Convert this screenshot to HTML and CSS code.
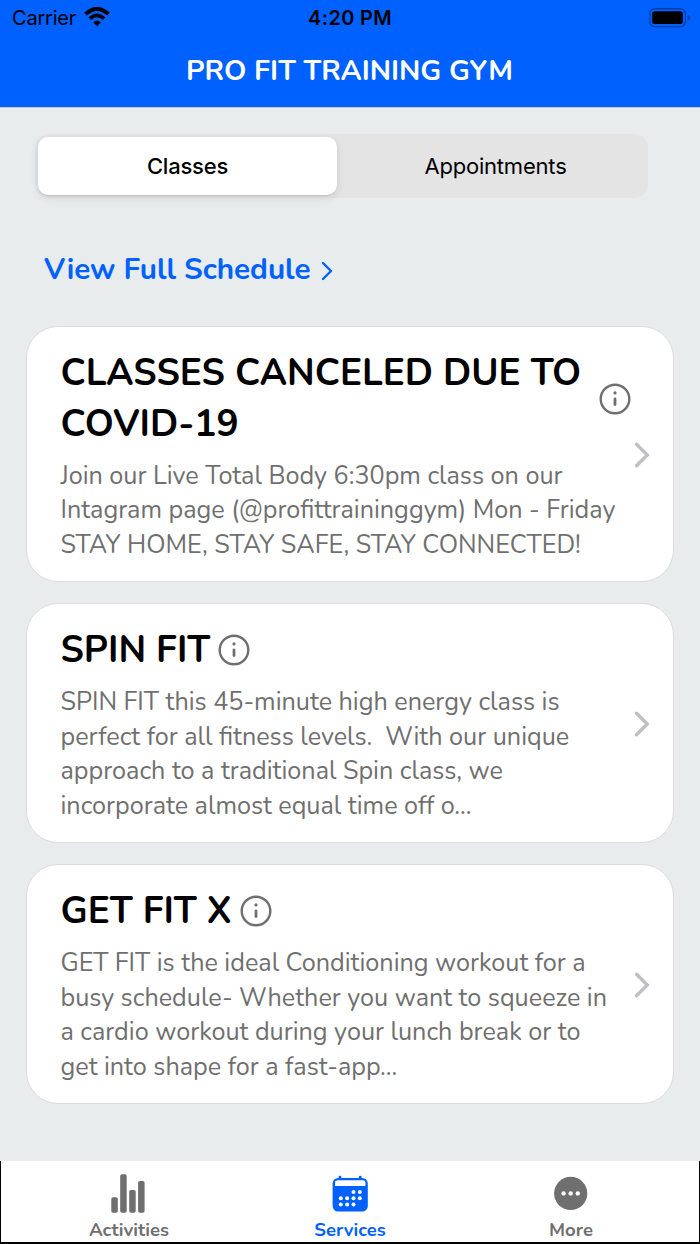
FILE: index.html
```
<!DOCTYPE html>
<html lang="en">
<head>
<meta charset="UTF-8" />
<meta name="viewport" content="width=device-width, initial-scale=1" />
<title>Pro Fit Training Gym</title>
<link rel="stylesheet" href="styles.css">
</head>
<body>

<!-- shared icons -->
<svg class="defs" width="0" height="0">
  <symbol id="info" viewBox="0 0 32 32">
    <circle cx="16" cy="16" r="14.3" fill="none" stroke="#6f6f6f" stroke-width="2.4" />
    <circle cx="16" cy="9.9" r="1.6" fill="#6f6f6f" />
    <path d="M16 16v5.6" stroke="#6f6f6f" stroke-width="2.8" stroke-linecap="round" />
  </symbol>
  <symbol id="chevron" viewBox="0 0 16 28">
    <path d="M2.5 3.2L13.3 14L2.5 24.8" fill="none" stroke="#c0c0c2" stroke-width="3.4" stroke-linecap="round" stroke-linejoin="miter" />
  </symbol>
</svg>

<header class="header">
  <div class="status">
    <div class="carrier">
      <span>Carrier</span>
      <svg class="wifi" width="26" height="20" viewBox="0 0 26 20">
        <path d="M1.5 7.2Q13 -3.4 24.5 7.2" fill="none" stroke="#000" stroke-width="3.8" />
        <path d="M5.8 11.7Q13 5.2 20.2 11.7" fill="none" stroke="#000" stroke-width="3.6" />
        <path d="M9.2 15.3Q13 11.9 16.8 15.3L13 19.2Z" fill="#000" />
      </svg>
    </div>
    <div class="time">4:20 PM</div>
    <div class="battery">
      <svg width="42" height="20" viewBox="0 0 42 20">
        <rect x="0.8" y="0.8" width="35.6" height="17.8" rx="5" fill="none" stroke="#003fa8" stroke-width="1.4" />
        <rect x="3.2" y="3.2" width="30.6" height="12.8" rx="2.6" fill="#000" />
        <path d="M38.6 6.5Q41 7.6 41 9.7Q41 11.8 38.6 12.9Z" fill="#003fa8" />
      </svg>
    </div>
  </div>
  <h1>PRO FIT TRAINING GYM</h1>
</header>

<main class="content">
  <div class="segmented">
    <button class="segment active">Classes</button>
    <button class="segment">Appointments</button>
  </div>

  <a class="schedule" href="#">
    <span>View Full Schedule</span>
    <svg width="12" height="20" viewBox="0 0 12 20">
      <path d="M2 2L10 10L2 18" fill="none" stroke="#0061ff" stroke-width="2.4" stroke-linecap="round" stroke-linejoin="round" />
    </svg>
  </a>

  <section class="card covid">
    <div class="card-text">
      <div class="card-title">
        <h2>CLASSES CANCELED DUE TO<br>COVID-19</h2>
        <svg class="info"><use href="#info" /></svg>
      </div>
      <p>
        Join our Live Total Body 6:30pm class on our<br>
        Intagram page (@profittraininggym) Mon - Friday<br>
        STAY HOME, STAY SAFE, STAY CONNECTED!
      </p>
    </div>
    <svg class="chevron"><use href="#chevron" /></svg>
  </section>

  <section class="card">
    <div class="card-text">
      <div class="card-title">
        <h2>SPIN FIT</h2>
        <svg class="info"><use href="#info" /></svg>
      </div>
      <p>
        SPIN FIT this 45-minute high energy class is<br>
        perfect for all fitness levels.&nbsp; With our unique<br>
        approach to a traditional Spin class, we<br>
        incorporate almost equal time off o...
      </p>
    </div>
    <svg class="chevron"><use href="#chevron" /></svg>
  </section>

  <section class="card">
    <div class="card-text">
      <div class="card-title">
        <h2>GET FIT X</h2>
        <svg class="info"><use href="#info" /></svg>
      </div>
      <p>
        GET FIT is the ideal Conditioning workout for a<br>
        busy schedule- Whether you want to squeeze in<br>
        a cardio workout during your lunch break or to<br>
        get into shape for a fast-app...
      </p>
    </div>
    <svg class="chevron"><use href="#chevron" /></svg>
  </section>
</main>

<nav class="tabbar">
  <a class="tab" href="#">
    <svg width="36" height="40" viewBox="0 0 36 40">
      <rect x="0.3" y="23.3" width="6.5" height="15.4" rx="1.8" />
      <rect x="9.2" y="0.3" width="6.5" height="38.4" rx="1.8" />
      <rect x="18.2" y="16" width="6.5" height="22.7" rx="1.8" />
      <rect x="27.1" y="7" width="6.5" height="31.7" rx="1.8" />
    </svg>
    <span>Activities</span>
  </a>
  <a class="tab active" href="#">
    <svg width="36" height="40" viewBox="0 0 36 40">
      <rect x="6.6" y="1.8" width="2.8" height="6" rx="1.2" />
      <rect x="26.8" y="1.8" width="2.8" height="6" rx="1.2" />
      <rect x="0.6" y="4" width="35.2" height="33.6" rx="5.5" />
      <path d="M6 6.3H30.5Q33.4 6.3 33.4 8.6V12.1H3V8.6Q3 6.3 6 6.3Z" fill="#fff" />
      <g fill="#fff">
        <circle cx="21.5" cy="18" r="2" /><circle cx="27.8" cy="18" r="2" />
        <circle cx="8.8" cy="24.3" r="2" /><circle cx="15.1" cy="24.3" r="2" /><circle cx="21.5" cy="24.3" r="2" /><circle cx="27.8" cy="24.3" r="2" />
        <circle cx="8.8" cy="30.6" r="2" /><circle cx="15.1" cy="30.6" r="2" /><circle cx="21.5" cy="30.6" r="2" />
      </g>
    </svg>
    <span>Services</span>
  </a>
  <a class="tab" href="#">
    <svg width="36" height="40" viewBox="0 0 36 40">
      <circle cx="17.7" cy="19.4" r="16.6" />
      <g fill="#fff">
        <circle cx="10.6" cy="19.4" r="2.2" /><circle cx="17.7" cy="19.4" r="2.2" /><circle cx="24.8" cy="19.4" r="2.2" />
      </g>
    </svg>
    <span>More</span>
  </a>
</nav>

</body>
</html>
```
FILE: styles.css
```
* {
  box-sizing: border-box;
}
body {
  margin: 0;
  height: 1244px;
  display: flex;
  flex-direction: column;
  background: #e8eced;
  font-family: Nunito, Lato, sans-serif;
  overflow: hidden;
}
svg {
  display: block;
  flex: none;
}
a {
  text-decoration: none;
}
.defs {
  position: absolute;
}

/* Header */
.header {
  height: 108px;
  flex: none;
  background: #0061ff;
  border-bottom: 1px solid #bfc5cd;
}
.status {
  height: 36px;
  padding: 0 12px;
  display: grid;
  grid-template-columns: 1fr auto 1fr;
  align-items: center;
  font-family: Inter, sans-serif;
  font-size: 20px;
  line-height: 36px;
  color: #000;
}
.carrier {
  display: flex;
  align-items: center;
  letter-spacing: -0.2px;
}
.wifi {
  margin: -3px 0 0 8px;
}
.time {
  font-weight: 600;
  letter-spacing: 0.3px;
}
.battery {
  justify-self: end;
  margin: -1px -3px 0 0;
}
h1 {
  margin: 0;
  padding-right: 1px;
  font-size: 28.5px;
  font-weight: 700;
  line-height: 70px;
  text-align: center;
  color: #fff;
}

/* Classes / Appointments switch */
.content {
  flex: 1;
  padding: 26px 26px 0;
}
.segmented {
  width: 613px;
  height: 64px;
  margin-left: 9px;
  padding: 3px;
  display: flex;
  gap: 9px;
  background: #e4e4e4;
  border-radius: 14px;
}
.segment {
  flex: 1;
  height: 58px;
  padding: 0;
  border: none;
  border-radius: 10px;
  background: none;
  font-family: Inter, sans-serif;
  font-size: 22px;
  letter-spacing: -0.2px;
  color: #000;
}
.segment.active {
  background: #fff;
  font-weight: 500;
  box-shadow: 0 1px 1px rgba(0,0,0,0.08), 0 3px 8px rgba(0,0,0,0.1);
}
.schedule {
  height: 60px;
  margin: 41px 0 27px 18px;
  display: flex;
  align-items: center;
  font-size: 29.7px;
  font-weight: 700;
  color: #0061ff;
}
.schedule svg {
  margin: 3px 0 0 10px;
}

/* Cards */
.card {
  height: 240px;
  margin-bottom: 21px;
  padding: 21px 23px 0 33.5px;
  display: flex;
  justify-content: space-between;
  background: #fff;
  border: 1px solid #dadddd;
  border-radius: 32px;
}
.card.covid {
  height: 256px;
}
.card-title {
  display: flex;
  align-items: center;
  margin-bottom: 9.5px;
}
h2 {
  margin: 0;
  font-size: 37px;
  font-weight: 700;
  line-height: 50.5px;
  white-space: nowrap;
  color: #000;
}
.info {
  width: 32px;
  height: 32px;
  margin-left: 8px;
}
.covid .info {
  margin-left: 17.5px;
}
.card p {
  margin: 0;
  font-size: 25.2px;
  line-height: 34.67px;
  white-space: nowrap;
  color: #6f6f6f;
}
.chevron {
  width: 16px;
  height: 28px;
  align-self: center;
  margin-top: -20px;
}
.covid .chevron {
  margin-left: -20px;
}

/* Bottom tabs */
.tabbar {
  height: 83px;
  flex: none;
  display: grid;
  grid-template-columns: repeat(3, 221px);
  justify-content: center;
  background: #fff;
  border: solid #000;
  border-width: 0 1px 2px;
}
.tab {
  padding-top: 13px;
  display: flex;
  flex-direction: column;
  align-items: center;
  font-size: 18.5px;
  font-weight: 700;
  line-height: 22px;
  color: #6f6f6f;
  fill: #6f6f6f;
}
.tab span {
  margin-top: 5px;
}
.tab.active {
  color: #0061ff;
  fill: #0061ff;
}
```
